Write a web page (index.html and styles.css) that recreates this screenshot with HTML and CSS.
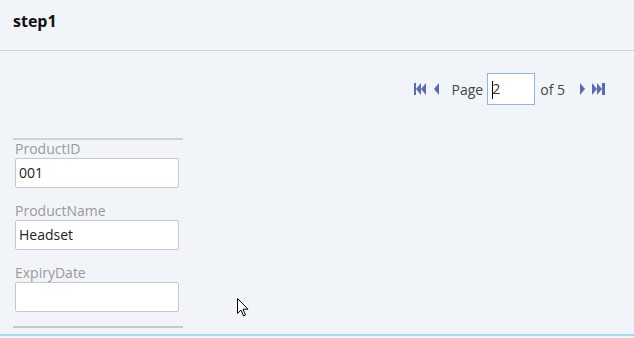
FILE: index.html
```html
<!doctype html>
<html lang="en">
    <head>
        <meta charset="utf-8">
        <title>step1</title>
        <link rel="stylesheet" href="styles.css">
    </head>
    <body>
        <div class="page">
            <div class="header">step1</div>
            <div class="pager">
                <svg class="first" width="13" height="12" viewBox="0 0 13 12"><rect x="0" y="0" width="2" height="12"/><polygon points="7,0 7,12 2,6"/><polygon points="12,0 12,12 7,6"/></svg>
                <svg class="prev" width="6" height="12" viewBox="0 0 6 12"><polygon points="5,0 5,12 0,6"/></svg>
                <span class="label">Page</span>
                <span class="page-input">2</span>
                <span class="label of">of 5</span>
                <svg class="next" width="6" height="12" viewBox="0 0 6 12"><polygon points="0,0 0,12 5,6"/></svg>
                <svg class="last" width="14" height="12" viewBox="0 0 14 12"><polygon points="0,0 0,12 5,6"/><polygon points="5,0 5,12 10,6"/><rect x="10" y="0" width="3" height="12"/></svg>
            </div>
            <div class="form">
                <div class="field">
                    <label>ProductID</label>
                    <div class="input">001</div>
                </div>
                <div class="field">
                    <label>ProductName</label>
                    <div class="input">Headset</div>
                </div>
                <div class="field">
                    <label>ExpiryDate</label>
                    <div class="input"></div>
                </div>
            </div>
            <svg class="cursor" width="13" height="20" viewBox="0 0 13 20"><path d="M0.5,0.5 L0.5,15.5 L4,12 L6.5,18 L8.5,17 L6,11.2 L11,11.2 Z" fill="#fff" stroke="#000" stroke-width="1"/></svg>
        </div>
    </body>
</html>
```

FILE: styles.css
```css
html, body {
    margin: 0;
    padding: 0;
    background: #f1f5f9;
}
body {
    font-family: "Open Sans", "Liberation Sans", sans-serif;
    font-size: 14px;
    color: #333;
}
.page {
    position: relative;
    height: 336px;
    box-sizing: border-box;
    border-bottom: 2px solid #a9dbf5;
}
.header {
    height: 51px;
    box-sizing: border-box;
    padding: 10px 0 0 13px;
    font-weight: bold;
    font-size: 16px;
    color: #111;
    border-bottom: 1px solid #cfd3d7;
}
.pager {
    display: flex;
    justify-content: flex-end;
    align-items: center;
    padding: 22px 28px 0 0;
}
.pager svg {
    fill: #5b6ab4;
}
.pager .prev {
    margin: 0 12px 0 7px;
}
.pager .label {
    color: #444;
}
.pager .of {
    margin: 0 15px 0 5px;
}
.pager .next {
    margin-right: 6px;
}
.page-input {
    width: 48px;
    height: 32px;
    margin-left: 4px;
    box-sizing: border-box;
    border: 1px solid #8fb4ee;
    background: #fff;
    line-height: 30px;
    padding-left: 4px;
    position: relative;
}
.page-input::before {
    content: "";
    position: absolute;
    left: 4px;
    top: 7px;
    width: 1px;
    height: 18px;
    background: #000;
}
.form {
    margin: 33px 0 0 13px;
    width: 168px;
    border-top: 2px solid #d0d3d6;
    border-bottom: 2px solid #c6c9cc;
    padding: 0 0 14px 2px;
    display: flex;
    flex-direction: column;
    gap: 14px;
}
.field label {
    display: block;
    color: #9a9a9a;
    line-height: 18px;
}
.field .input {
    width: 164px;
    height: 30px;
    box-sizing: border-box;
    background: #fff;
    border: 1px solid #c8c8c8;
    border-radius: 2px;
    padding: 0 3px;
    line-height: 28px;
    color: #222;
}
.cursor {
    position: absolute;
    left: 237px;
    top: 298px;
}
```
